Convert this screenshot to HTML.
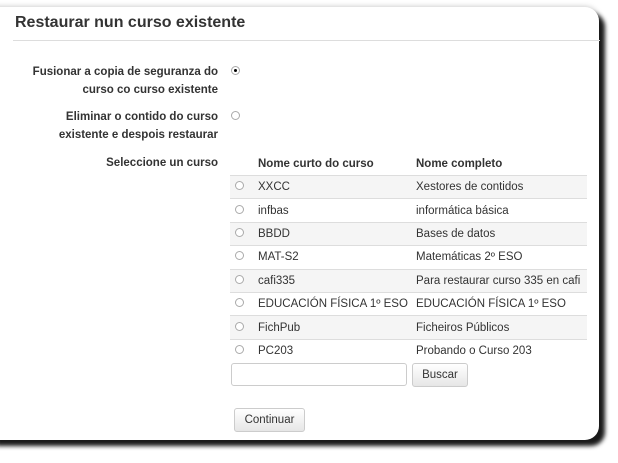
<!DOCTYPE html>
<html><head><style>
body{margin:0;width:618px;height:463px;background:#fff;font-family:"Liberation Sans",sans-serif;position:relative;overflow:hidden}
.panel{position:absolute;left:-10px;top:7px;width:609px;height:433px;background:#fff;border-radius:0 14px 14px 0;box-shadow:6px 6px 4px #1a1a1a,0 0 6px rgba(0,0,0,.25)}
h2{position:absolute;left:15px;top:14px;margin:0;font-size:16px;font-weight:bold;color:#333}
.hr{position:absolute;left:13px;top:40px;width:587px;height:1px;background:#ddd}
.lbl{position:absolute;right:400px;text-align:right;font-size:11.5px;font-weight:bold;color:#333;line-height:18px}
.rad{position:absolute;width:7px;height:7px;border:1px solid #aaa;border-radius:50%;background:#fff}
.rad.on::after{content:"";position:absolute;left:2px;top:2px;width:3px;height:3px;border-radius:50%;background:#000}
table{position:absolute;left:230px;top:153px;width:357px;border-collapse:collapse;font-size:11.5px;color:#333}
td,th{height:22.4px;padding:0;text-align:left;border-top:1px solid #ddd}
th{border-top:none;font-weight:bold;height:22px}
tr.s td{background:#f5f5f5}
.btn{position:absolute;border:1px solid #ccc;border-radius:3px;background:linear-gradient(#fff,#e6e6e6);font-size:11.5px;color:#333;text-align:center;box-sizing:border-box}
.r{position:relative;display:inline-block;left:5px}
</style></head><body>
<div class="panel"></div>
<h2>Restaurar nun curso existente</h2>
<div class="hr"></div>
<div class="lbl" style="top:63px">Fusionar a copia de seguranza do<br>curso co curso existente</div>
<div class="rad on" style="left:231px;top:66px"></div>
<div class="lbl" style="top:108px">Eliminar o contido do curso<br>existente e despois restaurar</div>
<div class="rad" style="left:231px;top:111px"></div>
<div class="lbl" style="top:154px">Seleccione un curso</div>
<table>
<tr><th style="width:28px"></th><th style="width:158px">Nome curto do curso</th><th>Nome completo</th></tr>
<tr class="s"><td><span class="rad r"></span></td><td>XXCC</td><td>Xestores de contidos</td></tr>
<tr><td><span class="rad r"></span></td><td>infbas</td><td>informática básica</td></tr>
<tr class="s"><td><span class="rad r"></span></td><td>BBDD</td><td>Bases de datos</td></tr>
<tr><td><span class="rad r"></span></td><td>MAT-S2</td><td>Matemáticas 2º ESO</td></tr>
<tr class="s"><td><span class="rad r"></span></td><td>cafi335</td><td style="white-space:nowrap">Para restaurar curso 335 en cafi</td></tr>
<tr><td><span class="rad r"></span></td><td style="white-space:nowrap">EDUCACIÓN FÍSICA 1º ESO</td><td style="white-space:nowrap">EDUCACIÓN FÍSICA 1º ESO</td></tr>
<tr class="s"><td><span class="rad r"></span></td><td>FichPub</td><td>Ficheiros Públicos</td></tr>
<tr><td><span class="rad r"></span></td><td>PC203</td><td>Probando o Curso 203</td></tr>
</table>
<div style="position:absolute;left:231px;top:363px;width:176px;height:23px;border:1px solid #ccc;border-radius:3px;box-sizing:border-box"></div>
<div class="btn" style="left:412px;top:363px;width:56px;height:24px;line-height:22px">Buscar</div>
<div class="btn" style="left:234px;top:408px;width:71px;height:24px;line-height:22px">Continuar</div>
</body></html>
